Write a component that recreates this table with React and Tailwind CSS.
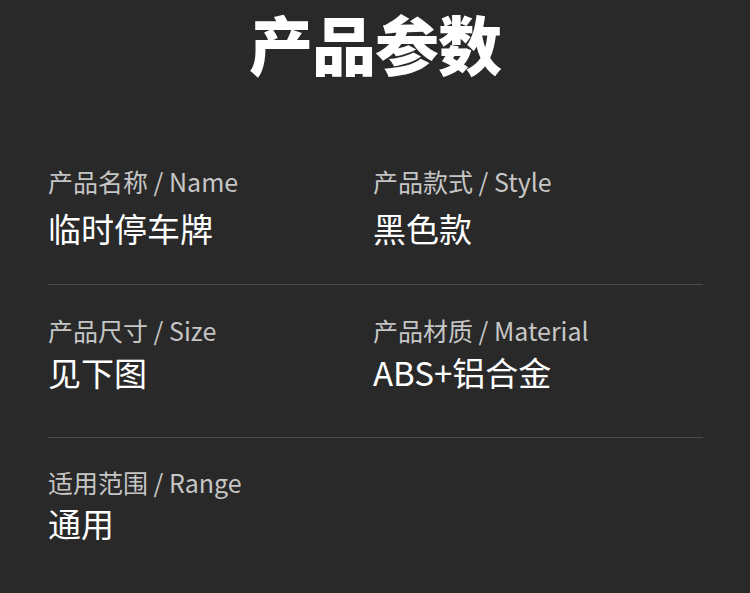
import React from "react";

const font = { fontFamily: '"Noto Sans CJK SC", "Noto Sans", sans-serif' };

function Cell({ label, value, gap }) {
  return (
    <div className="flex flex-col">
      <div className="text-[25px] leading-[34px] text-[#c6c6c6]">{label}</div>
      <div className={`text-[33px] leading-[40px] font-normal text-white ${gap}`}>{value}</div>
    </div>
  );
}

export default function App() {
  return (
    <div
      className="w-[750px] h-[593px] bg-[#292929] overflow-hidden"
      style={font}
    >
      <div className="pt-[2px] text-center text-[64px] leading-[80px] font-black text-white tracking-[-1px]">
        产品参数
      </div>
      <div className="pl-[48px] pr-[47px] mt-[82px]">
        <div className="grid grid-cols-[325px_1fr] pb-[36px] border-b border-[#4a4a4a]">
          <Cell label="产品名称 / Name" value="临时停车牌" gap="mt-[10px]" />
          <Cell label="产品款式 / Style" value="黑色款" gap="mt-[10px]" />
        </div>
        <div className="grid grid-cols-[325px_1fr] pt-[28px] pb-[45px] border-b border-[#4a4a4a]">
          <Cell label="产品尺寸 / Size" value="见下图" gap="mt-[5px]" />
          <Cell label="产品材质 / Material" value="ABS+铝合金" gap="mt-[5px]" />
        </div>
        <div className="grid grid-cols-[325px_1fr] pt-[27px]">
          <Cell label="适用范围 / Range" value="通用" gap="mt-[4px]" />
        </div>
      </div>
    </div>
  );
}
